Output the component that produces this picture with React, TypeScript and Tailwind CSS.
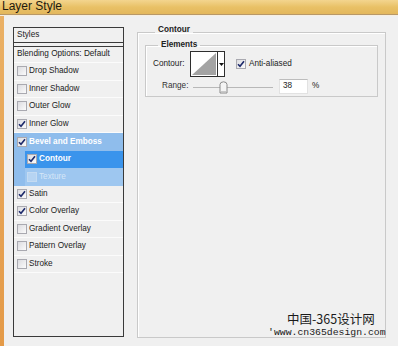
import React from "react";

type Item = { label: string; checked: boolean };

const topItems: Item[] = [
  { label: "Drop Shadow", checked: false },
  { label: "Inner Shadow", checked: false },
  { label: "Outer Glow", checked: false },
  { label: "Inner Glow", checked: true },
];

const bottomItems: Item[] = [
  { label: "Satin", checked: true },
  { label: "Color Overlay", checked: true },
  { label: "Gradient Overlay", checked: false },
  { label: "Pattern Overlay", checked: false },
  { label: "Stroke", checked: false },
];

function Check({ checked, faded = false }: { checked: boolean; faded?: boolean }) {
  return (
    <span
      className={
        "flex h-[10px] w-[10px] shrink-0 items-center justify-center border " +
        (faded
          ? "border-[#c4dbf2] bg-[#b6d4f2]"
          : "border-[#a9a9b0] bg-gradient-to-br from-[#dcdce0] to-[#fbfbfb]")
      }
    >
      {checked && (
        <svg width="8" height="8" viewBox="0 0 8 8">
          <path d="M1 4.2 L3 6.3 L7 1.2" fill="none" stroke="#1d2a6b" strokeWidth="1.6" />
        </svg>
      )}
    </span>
  );
}

function Row({ item }: { item: Item }) {
  return (
    <div className="flex h-[17.5px] items-center gap-[2px] border-b border-[#fbfbfb] pl-[3px]">
      <Check checked={item.checked} />
      <span>{item.label}</span>
    </div>
  );
}

export default function App() {
  return (
    <div
      className="relative h-[346px] w-[398px] overflow-hidden bg-[#f0f0f0] text-[8.2px] text-[#222]"
      style={{ fontFamily: '"Liberation Sans", Arial, sans-serif' }}
    >
      {/* Title bar */}
      <div className="h-[14px] bg-gradient-to-b from-[#f3d58e] via-[#e9c166] to-[#e3b75c] pl-[2px] text-[12px] leading-[13px] text-[#1e1a10]">
        Layer Style
      </div>
      <div className="h-[1px] bg-[#b89868]" />
      <div className="h-[1px] bg-[#f7efe0]" />

      <div className="flex h-[330px]">
        <div className="w-[4px] bg-gradient-to-b from-[#eab064] to-[#e49a48]" />

        {/* Left list */}
        <div className="ml-[9px] mt-[11px] flex h-[310px] w-[111px] flex-col border border-[#3a3a3a] bg-[#f0f0f0]">
          <div className="flex h-[15px] items-center border-b border-[#3a3a3a] pl-[3px]">Styles</div>
          <div className="h-[4px] border-b border-[#3a3a3a]" />
          <div className="flex h-[16px] items-center border-b border-[#fbfbfb] pl-[3px]">
            Blending Options: Default
          </div>
          {topItems.map((it) => (
            <Row key={it.label} item={it} />
          ))}
          <div className="bg-[#8fbdec]">
            <div className="flex h-[17.5px] items-center gap-[2px] pl-[3px] font-bold text-white">
              <Check checked />
              <span>Bevel and Emboss</span>
            </div>
            <div className="ml-[11px] flex h-[17.5px] items-center gap-[2px] bg-[#3a94ec] pl-[2px] font-bold text-white">
              <Check checked />
              <span>Contour</span>
            </div>
            <div className="ml-[11px] flex h-[17.5px] items-center gap-[2px] bg-[#9ec7f0] pl-[2px] text-[#d6e6f7]">
              <Check checked={false} faded />
              <span>Texture</span>
            </div>
          </div>
          {bottomItems.map((it) => (
            <Row key={it.label} item={it} />
          ))}
        </div>

        {/* Right panel */}
        <fieldset className="ml-[13px] mt-[9px] h-[313px] w-[249px] border border-[#c9c9c9] px-[7px] shadow-[inset_1px_1px_0_#fff]">
          <legend className="ml-[10px] px-[3px] pb-[4px] text-[8.2px] leading-[10px] font-bold">Contour</legend>
          <fieldset className="mt-[1px] h-[57px] border border-[#c9c9c9] shadow-[inset_1px_1px_0_#fff]">
            <legend className="ml-[12px] px-[3px] text-[8.2px] leading-[10px] font-bold">Elements</legend>
            <div className="mt-[1px] flex items-center">
              <span className="ml-[7px] w-[37px]">Contour:</span>
              <div className="flex h-[26px] border border-[#2e2e2e] bg-white">
                <svg width="26" height="24" viewBox="0 0 26 24">
                  <polygon points="1,23 25,1 25,23" fill="#a3a3a3" />
                </svg>
                <div className="flex w-[7px] items-center justify-center border-l border-[#2e2e2e]">
                  <svg width="5" height="3" viewBox="0 0 5 3">
                    <polygon points="0,0 5,0 2.5,3" fill="#111" />
                  </svg>
                </div>
              </div>
              <span className="ml-[11px] mr-[3px]">
                <Check checked />
              </span>
              <span>Anti-aliased</span>
            </div>
            <div className="mt-[2px] flex items-center">
              <span className="ml-[16px] w-[31px] text-[#333]">Range:</span>
              <div className="relative h-[14px] w-[80px]">
                <div className="absolute left-0 right-0 top-[7px] h-[1px] bg-[#b8b8b8]" />
                <svg className="absolute left-[26px] top-[1px]" width="9" height="13" viewBox="0 0 9 13">
                  <path d="M1 3.5 Q1 1 4.5 0.8 Q8 1 8 3.5 L8 12 L1 12 Z" fill="#f4f4f4" stroke="#8a8a8a" strokeWidth="1" />
                  <path d="M2 10.5 L7 10.5" stroke="#c8c8c8" strokeWidth="1" />
                </svg>
              </div>
              <div className="ml-[6px] flex h-[15px] w-[29px] items-center border border-[#e2e2e2] border-t-[#bdbdbd] bg-white pl-[3px]">
                38
              </div>
              <span className="ml-[4px]">%</span>
            </div>
          </fieldset>
        </fieldset>
      </div>

      {/* watermark */}
      <div
        className="absolute left-[287px] top-[312px] text-[12.5px] leading-[13px] text-[#1a1a1a]"
        style={{ fontFamily: '"Noto Sans CJK SC", sans-serif' }}
      >
        中国-365设计网
      </div>
      <div
        className="absolute left-[268px] top-[327px] text-[9.8px] leading-[11px] text-[#1a1a1a]"
        style={{ fontFamily: '"Liberation Mono", monospace' }}
      >
        'www.cn365design.com
      </div>
    </div>
  );
}
